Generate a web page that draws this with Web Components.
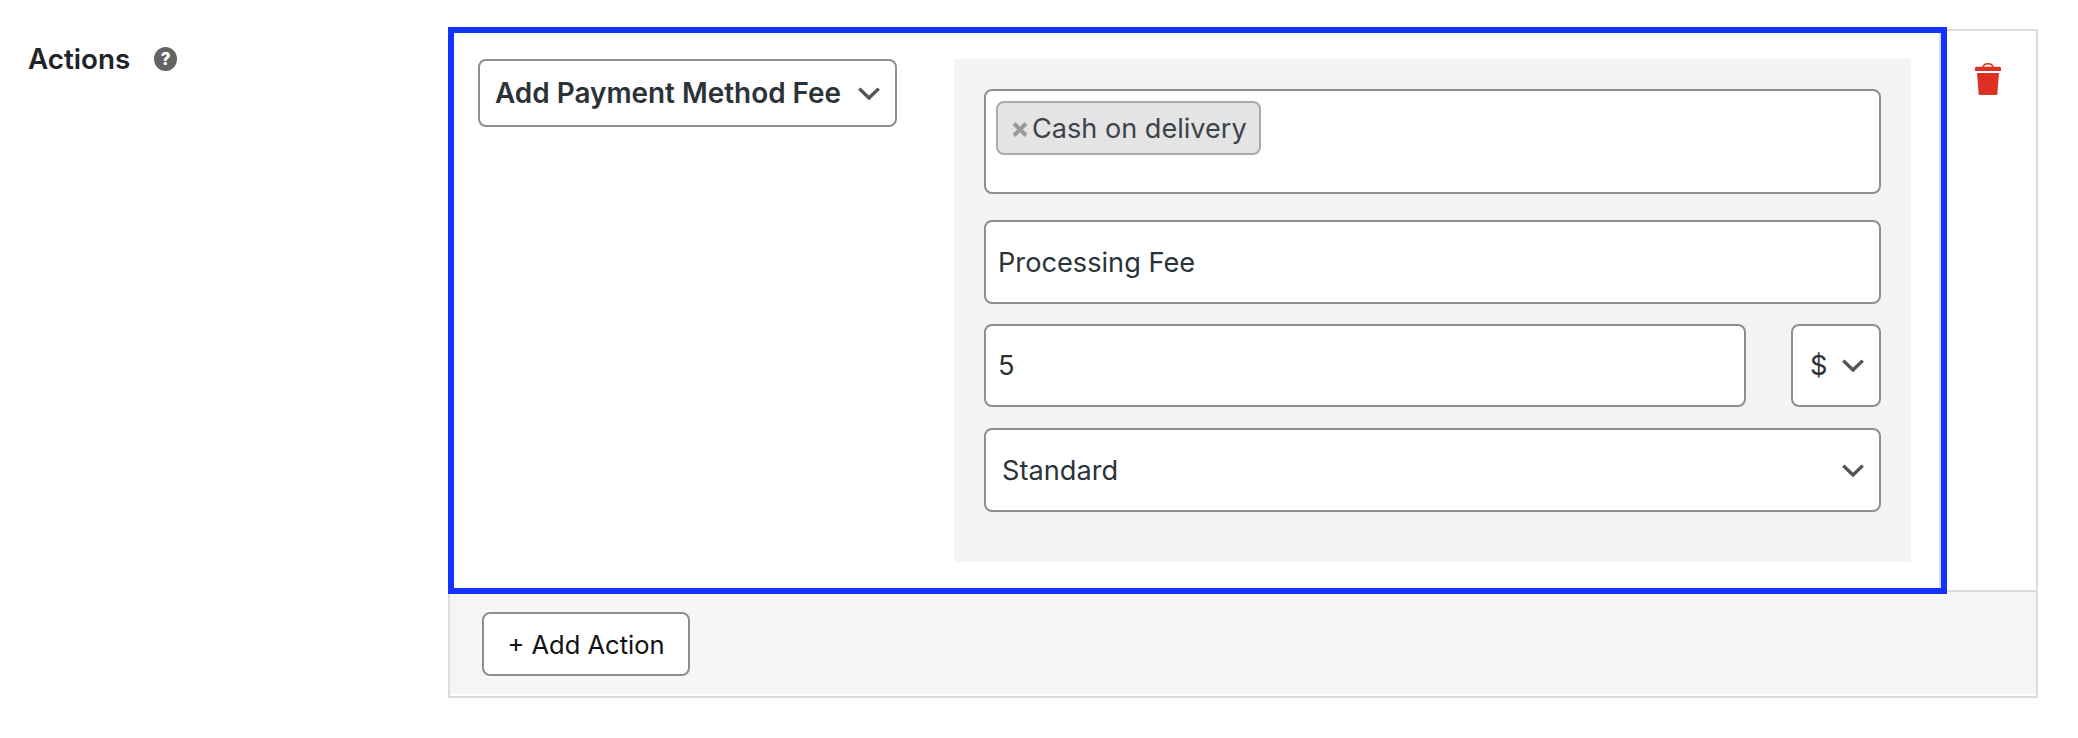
<!DOCTYPE html>
<html lang="en">
<head>
<meta charset="utf-8">
<title>Actions</title>
<style>
    html, body { margin: 0; background: #fff; }
    body { font-family: Inter, "Liberation Sans", sans-serif; color: #2c3338; }
</style>
</head>
<body>
<rule-field>
    <span slot="label">Actions</span>
    <action-table>
        <action-row>
            <field-box slot="type" kind="select" strong style="--w:419px;--h:68px;--pad:15px">Add Payment Method Fee</field-box>
            <chip-box slot="fields"><fee-chip>Cash on delivery</fee-chip></chip-box>
            <field-box slot="fields" style="--h:84px;--pad:12px;--after:20px">Processing Fee</field-box>
            <amount-row slot="fields">
                <field-box style="--w:762px;--h:83px;--pad:12px">5</field-box>
                <field-box kind="select" style="--w:90px;--h:83px;--pad:17px;--chev:15px">$</field-box>
            </amount-row>
            <field-box slot="fields" kind="select" style="--h:84px;--pad:16px">Standard</field-box>
        </action-row>
        <add-button slot="footer">+ Add Action</add-button>
    </action-table>
</rule-field>

<script>
const chevron = `<svg width="22" height="13" viewBox="0 0 22 13" fill="none"><path d="M1.3 1.6 11 11 20.7 1.6" stroke="#555" stroke-width="3.4"/></svg>`;

class RuleField extends HTMLElement {
    constructor() {
        super();
        this.attachShadow({ mode: 'open' }).innerHTML = `
        <style>
            :host { display: grid; grid-template-columns: 448px 1590px; padding-top: 29px; }
            .label { display: flex; align-items: center; gap: 24px; padding: 17px 0 0 28px; height: 26px;
                font-size: 27.8px; font-weight: 600; color: #1d2327; }
            .help { width: 23px; height: 24px; border-radius: 50%; background: #646464; color: #fff;
                font-size: 17px; font-weight: 800; display: flex; align-items: center; justify-content: center; }
        </style>
        <div class="label"><slot name="label"></slot><span class="help">?</span></div>
        <slot></slot>`;
    }
}

class ActionTable extends HTMLElement {
    constructor() {
        super();
        this.attachShadow({ mode: 'open' }).innerHTML = `
        <style>
            :host { display: block; position: relative; border: 2px solid #ddd; box-sizing: border-box; height: 669px; }
            .footer { background: #f5f5f5; border-top: 2px solid #ddd; height: 104px; padding: 20px 0 0 32px; box-sizing: border-box; }
            .highlight { position: absolute; left: -2px; top: -4px; width: 1499px; height: 567px; box-sizing: border-box;
                border: 6px solid #1433ff; pointer-events: none; }
        </style>
        <slot></slot>
        <div class="footer"><slot name="footer"></slot></div>
        <div class="highlight"></div>`;
    }
}

class ActionRow extends HTMLElement {
    constructor() {
        super();
        this.attachShadow({ mode: 'open' }).innerHTML = `
        <style>
            :host { display: flex; height: 559px; box-sizing: border-box; }
            .main { display: flex; gap: 57px; width: 1491px; padding: 28px 0 0 28px; box-sizing: border-box;
                border-right: 2px solid #ddd; }
            .panel { width: 957px; height: 503px; box-sizing: border-box; background: #f4f4f4; padding: 30px 30px 0; }
            .delete { flex: 1; display: flex; justify-content: center; padding: 32px 2px 0 0; }
        </style>
        <div class="main">
            <div><slot name="type"></slot></div>
            <div class="panel"><slot name="fields"></slot></div>
        </div>
        <div class="delete">
            <svg width="26" height="32" viewBox="0 0 26 32">
                <path d="M8.2 4.2C8.4 1.6 10.4.8 13 .8s4.6.8 4.8 3.4" fill="none" stroke="#dc3020" stroke-width="1.6"/>
                <path d="M1.5 3.7h23c.9 0 1.5.6 1.5 1.5V8H0V5.200C0 4.300.6 3.700 1.500 3.700z" fill="#dc3020"/>
                <path d="M2 10h22l-1.600 20.500c-.1 1-.7 1.500-1.600 1.500H5.200c-.9 0-1.500-.5-1.600-1.500z" fill="#dc3020"/>
            </svg>
        </div>`;
    }
}

class FieldBox extends HTMLElement {
    constructor() {
        super();
        const isSelect = this.getAttribute('kind') === 'select';
        this.attachShadow({ mode: 'open' }).innerHTML = `
        <style>
            :host { display: flex; align-items: center; justify-content: space-between; box-sizing: border-box;
                width: var(--w, 897px); height: var(--h, 83px); margin-bottom: var(--after, 0);
                padding: 0 var(--chev, 15px) 0 var(--pad, 13px);
                background: #fff; border: 2px solid #8c8f94; border-radius: 8px;
                font-size: 27.2px; color: #2c3338; white-space: nowrap; }
            :host([strong]) { font-weight: 600; font-size: 27.9px; }
            svg { flex: none; }
        </style>
        <span><slot></slot></span>${isSelect ? chevron : ''}`;
    }
}

class ChipBox extends HTMLElement {
    constructor() {
        super();
        this.attachShadow({ mode: 'open' }).innerHTML = `
        <style>
            :host { display: block; box-sizing: border-box; height: 105px; margin-bottom: 26px; padding: 10px;
                background: #fff; border: 2px solid #8c8f94; border-radius: 8px; }
        </style>
        <slot></slot>`;
    }
}

class FeeChip extends HTMLElement {
    constructor() {
        super();
        this.attachShadow({ mode: 'open' }).innerHTML = `
        <style>
            :host { display: inline-flex; align-items: center; box-sizing: border-box; height: 54px; padding: 0 12px 0 14px;
                gap: 4px; background: #e4e4e4; border: 2px solid #aaa; border-radius: 8px;
                font-size: 27.1px; color: #3c434a; white-space: nowrap; }
            svg { flex: none; margin-top: 2px; }
        </style>
        <svg width="16" height="15" viewBox="0 0 16 15"><path d="M2 1.500 14 13.500M14 1.500 2 13.500" stroke="#999" stroke-width="4"/></svg>
        <slot></slot>`;
    }
}

class AmountRow extends HTMLElement {
    constructor() {
        super();
        this.attachShadow({ mode: 'open' }).innerHTML = `
        <style>
            :host { display: flex; justify-content: space-between; margin-bottom: 21px; }
        </style>
        <slot></slot>`;
    }
}

class AddButton extends HTMLElement {
    constructor() {
        super();
        this.attachShadow({ mode: 'open' }).innerHTML = `
        <style>
            :host { display: flex; align-items: center; justify-content: center; box-sizing: border-box;
                width: 208px; height: 64px; background: #fff; border: 2px solid #8c8f94; border-radius: 8px;
                font-size: 25.5px; color: #111; white-space: nowrap; }
        </style>
        <slot></slot>`;
    }
}

customElements.define('rule-field', RuleField);
customElements.define('action-table', ActionTable);
customElements.define('action-row', ActionRow);
customElements.define('field-box', FieldBox);
customElements.define('chip-box', ChipBox);
customElements.define('fee-chip', FeeChip);
customElements.define('amount-row', AmountRow);
customElements.define('add-button', AddButton);
</script>
</body>
</html>
